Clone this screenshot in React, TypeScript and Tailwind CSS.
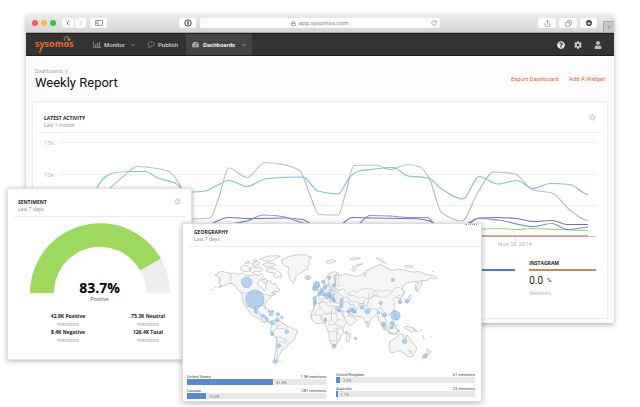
import React from "react";
import {
  ChevronDown,
  ChevronLeft,
  ChevronRight,
  Copy,
  Lock,
  Plus,
  RotateCw,
  Share,
} from "lucide-react";
import { FaArrowCircleDown, FaCog, FaQuestionCircle, FaTachometerAlt, FaUser } from "react-icons/fa";

type Point = [number, number];

/* Horizontal-tangent friendly spline through a list of points. */
function smooth(points: Point[]): string {
  const slope = points.map((p, i) => {
    if (i === 0 || i === points.length - 1) return 0;
    const a = points[i - 1];
    const b = points[i + 1];
    const left = (p[1] - a[1]) / (p[0] - a[0]);
    const right = (b[1] - p[1]) / (b[0] - p[0]);
    return left * right <= 0 ? 0 : (2 * left * right) / (left + right);
  });
  let d = `M${points[0][0]} ${points[0][1]}`;
  for (let i = 1; i < points.length; i++) {
    const [x0, y0] = points[i - 1];
    const [x1, y1] = points[i];
    const h = (x1 - x0) / 3;
    d += `C${x0 + h} ${y0 + slope[i - 1] * h} ${x1 - h} ${y1 - slope[i] * h} ${x1} ${y1}`;
  }
  return d;
}

const series: { color: string; points: Point[] }[] = [
  {
    color: "#bdbdbd",
    points: [[96, 200], [110, 188], [125, 175], [137, 166.5], [150, 167.5], [168, 171], [180, 185], [192, 219], [210, 218], [218, 200], [229, 168], [247, 177.5], [265, 162.5], [285, 165], [300, 171], [310, 195], [319, 214.5], [338, 215], [346, 192], [354, 165.5], [375, 165], [390, 169.5], [408, 164.5], [420, 167], [429, 178], [442, 213], [462, 221], [478, 192], [494, 172], [515, 174], [533, 190], [552, 193], [570, 210], [588, 220.5]],
  },
  {
    color: "#7fc1dc",
    points: [[92, 200], [97, 188], [104, 178], [113, 173], [130, 171.5], [145, 171.5], [158, 178], [175, 183], [184, 190], [193, 192], [205, 191], [216, 186], [229, 180.5], [247, 186.5], [265, 179], [285, 177.5], [303, 177], [318, 191], [338, 194], [350, 177], [359, 171], [375, 169], [393, 167.5], [408, 176], [428, 178], [443, 190], [463, 199], [479, 176.5], [498, 184], [517, 180.5], [533, 188.5], [550, 183.5], [570, 184.5], [588, 194.5]],
  },
  { color: "#9fd46a", points: [[466, 231], [482, 229], [500, 228.5], [517, 229.5], [531, 228.5], [560, 229.5], [588, 230.5]] },
  {
    color: "#8a68b9",
    points: [[205, 226], [213, 223], [228, 217.5], [250, 218.5], [285, 218], [303, 219.5], [315, 226], [338, 226], [352, 217.5], [375, 218], [420, 219], [431, 221.5], [440, 226], [466, 224], [479, 218], [498, 217.5], [517, 218.5], [533, 221.5], [552, 220.5], [567, 224.5], [588, 224.5]],
  },
  {
    color: "#6f98da",
    points: [[228, 224], [247, 221], [263, 215], [282, 216.5], [300, 222], [315, 226], [355, 226], [370, 215.5], [390, 216], [408, 217.5], [428, 217.5], [436, 226], [466, 225], [478, 218.5], [498, 220], [533, 226.5], [552, 223.5], [567, 229.5], [588, 227.5]],
  },
];

function ActivityChart() {
  return (
    <svg viewBox="44 133 552 118" preserveAspectRatio="none" className="block h-[118px] w-full" role="img" aria-label="Latest activity">
      <g stroke="#f1f1f1">
        <path d="M60 142.5H596M60 174.5H596M60 205.5H596" />
        <path d="M515.5 237v5" stroke="#dddddd" />
      </g>
      <g fill="#b3b3b3" fontSize="6">
        <text x="44" y="145">15k</text>
        <text x="44" y="177">10k</text>
        <text x="515" y="246" textAnchor="middle" className="font-['Roboto']">Nov 26 2014</text>
      </g>
      <g fill="none" strokeWidth="1.2">
        {series.map((s) => (
          <path key={s.color} d={smooth(s.points)} stroke={s.color} />
        ))}
      </g>
      <path d="M60 236.5H596" stroke="#c4c4cc" />
      <path d="M60 236H588" stroke="#cf9482" strokeWidth="1.6" />
    </svg>
  );
}

const land = [
  // Alaska, Canada, United States and Mexico
  "M118 180l8-3 4-6 10-2 14 4 12 2 12-1 12 4 12-4 10 7 12 1 14-4 12 3 8-6 6 6-6 8-4 3-8 11 2 8 12 8 6 9 5-6-1-10 2-6 3-10 12 3 4 9 9-3 4 11 9 8-3 5-14 1-8 4 10 0 0 5-9 3-5 7-8 6-6 9-1 10 4 9-5-3-4-9-11 0-12 2-4 8 1 12 7 5 7-5 5 2-3 8 6 3 0 9 7 5 4 0-3 4-9-4-9-10-11-5-12-6-8-12-8-14-6-8-4-10-2-18-1-5-10-6-7-13-11-7-10-1-10 6-8 3-12 4 8-7-6-3-2-5 6-4-7-3 1-4 6-1z",
  "M278 322l10-5 14-1 12 2 11 8 9 6 10 5 18 8 4 6-6 11-3 13-9 7-8 4-7 11-7 7-8 2-2 8-5 6-1 7-3 5 3 8-8 1-5-9 1-15 4-12 0-17 2-15-4-8-8-6-7-14 2-9 4-7-1-6z",
  // Greenland and the Arctic islands
  "M318 133l12-2 8-6 14-3 12-3 12 1 12-1 10 5 12 3-8 4-3 10 3 6-6 8 1 6-10 6-8 5-9 4-8 8-4 11-3 10-6-5-6-8-3-12-3-9 4-9-3-7-9-1-6-5z",
  "M252 134l12-7 16-4 28-1 6 3-14 5-8 7-12 2-14-1-4-3zM228 146l14-6 12 4-4 6-14 3zM196 156l10-6 12 4 8 8-8 8-16-2-6-5zM222 160l12-5 9 4 8-3 10 6-6 8-16 0-8 4-8-6zM262 148l18-5 20 5-4 6-20 3-10-4zM270 166l14-7 16 2 8 8 8 6 2 12-10-3-5 7-8-8 2-9-14-2-8-2zM256 196l12-5 9 7-7 7zM208 145l8-6 8 3-6 5zM234 137l6-4 6 4-5 3z",
  "M387 186l6-4 11 1 5 5-9 6-10-2z",
  // British Isles, Iberia and Europe
  "M414 216l5-6 4 6-3 8-7 1zM423 200l6 2 0 8 6 8-2 8-9 2 3-10-6-7z",
  "M419 245l10-5 4-8 6-4 5-8 6-2 3-6-2-8 5 2 3 8 10 0 5-4 0-8 5-4 4 8 8 6-4 20 12 10 10 8-10 8-14-4-6 2 4 10-10-5-6-10-8-6 6 14 2 6-8-8-6-8-8 2-8 6 1 6-5 6-6 4-7-2z",
  "M446 206l0-8 6-10 6-10 9-6 12-2 10 5 2 8-6 4-3-9-6 4 0 10 6 9 7 0-9 5-7 0-1 8-6 4-4-12-6 4-6 0z",
  // Africa and Madagascar
  "M416 266l14-2 16-4 8 2 0 6 8 5 7-2 8 3 12 0 4 10 7 15 7 10 15-1-3 9-10 12-7 9 3 15-8 8-3 10-7 12-6 7-8 3-6-6-7-18 1-12-6-15-3-9-7-10-13 2-11 1-9-9-6-10 3-14 6-12z",
  "M516 360l7-6 2 6-5 20-7 0-2-8z",
  // Asia
  "M483 176l12 6 14-6 14 4 20 4 16-5 8-8-1 14 6-2-1-16 12-4 20-11 14-4 8 6 24 12 18-4 20 3 24 6 22-1 18 8 22 4 12 6-12 4-6-4-12 8-16 1-8 8-1 12-7 12-5-8 2-14 8-9-22 4-10 0-12 10-4 12 8 6-3 8-9 12-9 0-8-3-7 7 6 8-3 9 3 9-8 12-10 8-12 0-2 6 8 14-5 8-7-8-2 10 6 8 1 8-8-9-4-16-5-4-3-12-9-4-6 7-8 6-3 13-3 10-7-10-4-14-8-7-10-2-14 0-8-6-12-8 8 14 12 2 8 10-7 9-15 8-6-8-10-21-3-10 3-6-14-1-10-6 2-6 14 0-2-6-8-4-6-6-8 0z",
  "M528 164l6-10 12-6 16-2-10 6-12 7-4 10zM602 130l10 0 12 8 8 7-12-3-10-8zM687 152l12-1 14 3-8 4-14-1zM523 131l14-3 18 1-10 4-18 2zM452 139l12-4 12 0 6 4-12 4-8 3-8-3z",
  "M725 212l6-12 9-4-2 14-6 10-6 10-4-8zM690 262l6-6 4-12 6-4 0 8-4 10-8 7zM671 256l4-4 3 12-5 2z",
  "M655 285l4 0 0 9-4-2zM657 296l6 6 4 12-7 0-3-8zM638 330l10-9 6 3-3 13-9 4-5-6zM618 322l9 8 10 14 4 6-8-3-9-12zM640 352l16 3 10 1-8 2-18-3zM656 330l10-1-5 5 3 8-6-4zM685 337l9-3 18 4 14 12-10-2-10 3-8-6-10-4zM713 344l6-2M574 318l4 6-3 3z",
  "M643 379l14-7 6-5 8-8 6-3 8 4-2 6 8 5 4-12 5 9 5 7 10 11 8 11-1 10-5 8-5 9-10 2-9-4-6-8-7-1-4-5-12 0-9 5-10 0-2-8-2-10zM700 407l9 2-2 8-5-3zM755 401l6 7 6 1-8 9-4-3zM741 424l12-8 3 3-8 10-7 1z",
];

const borders =
  "M166 174v32M196 234h60l12 4 12 4 12-2 10-5M206 272l14 2 12-3 8 8M256 196l12-5M300 318l-2 10 8 5 10-6 8-2 3 8M300 343l8-10M284 354l8-5 8-6M302 366l12 0 8 5 10 8-2 9-8-7-14-3-8-12M301 387l8-8M312 388l10 6-3 10M302 340l22 1 12-6M306 398l-3 40M322 376l8-6 4 10" +
  "M418 267l-5 15-12 10M430 264l4 14-18 14M434 278l20 20 16-10 0-14M404 300h16v-8M420 304l14-6 2 16M436 300l18-4M454 298l4-2 24 0 8-10M480 273v24M440 318l0-16M448 326l4-22M458 326l10-14 0-24M468 312l10 12M458 330l20-2 10 2M482 297l5 18-9 12M487 315l10-1 7 6M488 330l14 6M488 330l-4 22 10 8M458 350l22-1 6 5M484 352l-2 20M462 378l20-2 8-6M482 372l8 10M472 398l1-18M480 395l4-14M497 336l-10 10M475 340l12 2" +
  "M430 256v-12l-10 0M435 232l10 12 4-10 8-4 10 6 9-6 8-8M448 218l6 10M460 216l2 14M470 214l8 6 12 4-4 12 18 8M466 238l14 0 8 12M462 236l6 12 10 2M480 236l6-10M455 244l10-4M458 208l4-24 8-6M478 206l2-26M490 180l-2 24-10 10M484 214l14-4M488 226l18-4 10 18M474 250l12 2M500 248l12-2 8 4 6 6M520 244l2-12 10-5 14 4 10-8 24-4 10 4 18 10-4 10-12 1-14 8-16-6-12 4-14-8-16-2M578 247l4-12M566 254l-2 12-14 0-6-8M544 256l-10 6-12-6M522 268l-2-12M505 262l10-2 7 8 14 2 4 16M540 286l10-10 2-10 14-2M556 282l10-16 8 6 6-12M572 272l10 8 18 3M594 230l16-5 12 5 16-6 14 6-10 8-14 9-20-2-14-7-6-6M574 268l6-14 8-4M606 296l-2-12-6 0M604 284l12-8 4 10 10 6M616 290l6 14 8-2 2 8M652 228l8-10 14 0 14 14-9 10M505 292l12-4 10 8M527 296l-14 10M586 252l10-14M660 250l8-8 10-2";

const bubbles: [number, number, number][] = [
  [238, 253, 28], [213, 202, 16], [242, 288, 6], [423, 210, 10], [417, 221, 6], [397, 189, 4],
  [461, 188, 5], [443, 201, 5], [449, 215, 6], [440, 227, 6], [433, 236, 6], [447, 239, 5],
  [456, 243, 7], [461, 237, 6], [469, 247, 6], [474, 256, 5], [468, 225, 4], [475, 211, 4],
  [417, 250, 5], [418, 259, 5], [417, 268, 4], [263, 302, 5], [271, 308, 4], [275, 315, 5],
  [280, 289, 3], [287, 297, 6], [291, 289, 3], [307, 298, 5], [319, 307, 4], [305, 314, 6],
  [290, 324, 5], [290, 357, 5], [334, 350, 6], [309, 392, 6], [298, 440, 6], [449, 315, 5],
  [490, 285, 6], [498, 255, 5], [498, 264, 5], [498, 273, 5], [519, 288, 4], [528, 284, 6],
  [534, 288, 6], [539, 291, 4], [560, 277, 6], [576, 289, 8], [609, 293, 4], [627, 299, 6],
  [616, 264, 5], [652, 195, 5], [673, 261, 5], [694, 258, 6], [660, 302, 14], [651, 324, 6],
  [648, 337, 5], [626, 329, 6], [668, 348, 4], [687, 379, 7], [749, 423, 6], [476, 394, 6],
  [513, 353, 4], [540, 371, 4],
];

function WorldMap() {
  return (
    <svg viewBox="24 96 891 375" className="block h-[125px] w-full" role="img" aria-label="Mentions by country">
      <g fill="#f6f6f6" stroke="#b2b2b2" strokeWidth="1.9" strokeLinejoin="round">
        {land.map((d) => (
          <path key={d} d={d} />
        ))}
        <path d={borders} fill="none" strokeWidth="1.4" />
        <path
          d="M102 226l9-4M117 219l8-4M130 216l10-5M280 286l16 5M301 296l9 2M260 332l4 2M319 439l4 1M732 348l8-4M742 360l4 14M765 367l4-4M770 168l6 2"
          fill="none"
        />
      </g>
      <g fill="#7db5ea" fillOpacity="0.55" stroke="#6aa9e6" strokeOpacity="0.8" strokeWidth="1.5">
        {bubbles.map(([x, y, r]) => (
          <circle key={`${x}-${y}`} cx={x} cy={y} r={r} />
        ))}
      </g>
    </svg>
  );
}

function Gauge() {
  return (
    <svg viewBox="0 0 140 70" className="mx-auto mt-[6px] block h-[70px] w-[140px]" role="img" aria-label="83.7% positive">
      <path d="M0 70A70 70 0 0 1 131 35.8L110.2 47.5A46 46 0 0 0 24 70Z" fill="#9dd95f" />
      <path d="M131 35.8A70 70 0 0 1 140 70H116A46 46 0 0 0 110.2 47.5Z" fill="#eeeeee" />
    </svg>
  );
}

function WidgetHead({ title, sub, gear }: { title: string; sub: string; gear?: boolean }) {
  return (
    <header className="flex h-[18px] items-start justify-between">
      <div>
        <h2 className="text-[5px] leading-[8px] font-bold text-[#222]">{title}</h2>
        <p className="text-[5px] leading-[7px] text-[#888]">{sub}</p>
      </div>
      {gear && (
        <button aria-label={`${title} settings`} className="text-[#d8d8d8]">
          <FaCog size={7} />
        </button>
      )}
    </header>
  );
}

function Stat({ value }: { value: string }) {
  return (
    <div>
      <dt className="font-bold text-[#222]">{value}</dt>
      <dd className="text-[#999]">mentions</dd>
    </div>
  );
}

function Country({ name, mentions, share, bar }: { name: string; mentions: string; share: string; bar: number }) {
  return (
    <div className="h-[14px] font-['Roboto'] text-[4px] leading-[5px] text-[#444]">
      <div className="flex justify-between">
        <span>{name}</span>
        <span>{mentions}</span>
      </div>
      <div className="flex h-[6px] items-center gap-[3px] bg-[#e8e8e8] text-[#777]">
        <div className="h-full bg-[#558bd0]" style={{ width: `${bar}%` }} />
        <span>{share}</span>
      </div>
    </div>
  );
}

function Logo() {
  return (
    <a href="#home" aria-label="sysomos" className="relative block w-[58px] text-[9px] leading-[20px] font-bold text-[#f26a21]">
      sysomos
      <svg viewBox="0 0 40 22" className="absolute top-0 left-0 h-[22px] w-[40px]" fill="none">
        <path d="M29.5 6.5a2.6 2.6 0 1 1 4.8-2.4" stroke="#999" />
        <circle cx="34" cy="5.5" r="1.6" fill="#f26a21" />
        <path d="M6.5 13l-2 6" stroke="#f26a21" strokeWidth="1.4" />
      </svg>
    </a>
  );
}

const chromeButton = "flex h-[10px] items-center justify-center rounded-[2px] bg-[#fcfcfc] text-[#777]";

function TitleBar() {
  return (
    <div className="flex h-[19px] items-center rounded-t-[4px] border-b border-[#a8a8a8] bg-linear-to-b from-[#ececec] to-[#d6d6d6] pl-[6px]">
      <div className="flex gap-[3px]">
        <span className="size-[6px] rounded-full bg-[#fc5753]" />
        <span className="size-[6px] rounded-full bg-[#fdbc2f]" />
        <span className="size-[6px] rounded-full bg-[#27c840]" />
      </div>
      <div className="ml-[6px] flex gap-px">
        <button aria-label="Back" className={`${chromeButton} w-[12px]`}>
          <ChevronLeft size={8} color="#333" />
        </button>
        <button aria-label="Forward" className={`${chromeButton} w-[11px]`}>
          <ChevronRight size={8} color="#bbb" />
        </button>
      </div>
      <button aria-label="Sidebar" className={`${chromeButton} ml-[4px] w-[17px]`}>
        <svg viewBox="0 0 8 6" className="h-[6px] w-[8px]" fill="none" stroke="#888" strokeWidth="0.8">
          <path d="M0.5 0.5h7v5h-7zM3 0.5v5M1.2 2h1M1.2 3.5h1" />
        </svg>
      </button>
      <button aria-label="Passwords" className={`${chromeButton} ml-[72px] w-[17px]`}>
        <svg viewBox="0 0 8 8" className="size-[8px]">
          <circle cx="4" cy="4" r="3.2" fill="none" stroke="#333" strokeWidth="0.9" />
          <path d="M4 2.2v3.6" stroke="#333" strokeWidth="1.3" />
        </svg>
      </button>
      <div className={`${chromeButton} relative ml-[4px] flex-1 gap-[2px] text-[6px] leading-[8px] text-[#444]`}>
        <Lock size={5} strokeWidth={3} color="#777" />
        <span>app.sysomos.com</span>
        <button aria-label="Reload" className="absolute right-[3px]">
          <RotateCw size={6} color="#777" />
        </button>
      </div>
      <div className="ml-[98px] flex gap-[3px]">
        <button aria-label="Share" className={`${chromeButton} w-[18px]`}>
          <Share size={7} />
        </button>
        <button aria-label="Tabs" className={`${chromeButton} w-[18px]`}>
          <Copy size={7} className="-scale-x-100" />
        </button>
        <button aria-label="Downloads" className={`${chromeButton} w-[17px]`}>
          <FaArrowCircleDown size={6} color="#333" />
        </button>
      </div>
      <button aria-label="New tab" className="ml-[6px] flex h-[11px] w-[11px] items-center justify-center self-end border-t border-l border-[#aaa] bg-[#c8c8c8] text-[#888]">
        <Plus size={6} />
      </button>
    </div>
  );
}

function NavBar() {
  return (
    <nav className="flex h-[23px] items-stretch border-y border-[#1c1c1c] bg-[#333] pl-[9px] text-[6px] text-[#d0d0d0]">
      <Logo />
      <a href="#monitor" className="flex w-[54px] items-center gap-[3px] font-['Roboto'] font-medium">
        <svg viewBox="0 0 8 7" className="h-[7px] w-[8px]" fill="none" stroke="#8c8c8c">
          <path d="M0.5 0.5v6h7.5" strokeWidth="0.8" />
          <path d="M2.4 6V3.6M4.3 6V2M6.4 6V1" strokeWidth="1.1" />
        </svg>
        Monitor
        <ChevronDown size={6} strokeWidth={3} className="ml-[2px]" color="#999" />
      </a>
      <a href="#publish" className="flex w-[39px] items-center gap-[3px] font-['Roboto'] font-medium">
        <svg viewBox="0 0 8 7" className="h-[7px] w-[8px]" fill="none" stroke="#8c8c8c" strokeWidth="0.8">
          <path d="M2 4.8a3.3 2.2 0 1 1 1.8 0.5L1.6 6.4z" />
        </svg>
        Publish
      </a>
      <a href="#dashboards" className="flex w-[66px] items-center gap-[4px] bg-[#444] pl-[6px] font-['Roboto'] font-bold text-[#eee]">
        <FaTachometerAlt size={7} color="#bbb" />
        Dashboards
        <ChevronDown size={6} strokeWidth={3} className="ml-[2px]" color="#bbb" />
      </a>
      <div className="ml-auto flex items-center gap-[9px] pr-[12px] text-[#ccc]">
        <button aria-label="Help">
          <FaQuestionCircle size={8} color="#e8e8e8" />
        </button>
        <button aria-label="Settings">
          <FaCog size={8} />
        </button>
        <button aria-label="Account" className="ml-[3px]">
          <FaUser size={8} color="#bbb" />
        </button>
      </div>
    </nav>
  );
}

function Browser() {
  return (
    <section className="rounded-t-[4px] bg-[#fcfcfc] shadow-[0_2px_5px_rgba(0,0,0,0.3)]">
      <TitleBar />
      <NavBar />
      <div className="px-[6px] pt-[11px] pb-[4px]">
        <div className="flex items-start justify-between px-[3px]">
          <div>
            <a href="#dashboards" className="flex items-center text-[5px] leading-[8px] text-[#999]">
              Dashboards
              <ChevronRight size={5} strokeWidth={3} className="ml-px" color="#666" />
            </a>
            <h1 className="font-['Roboto'] text-[13px] leading-[15px] text-[#111]">Weekly Report</h1>
          </div>
          <div className="mt-[7px] flex gap-[10px] font-['Roboto'] text-[6px] leading-[10px] text-[#f0592f]">
            <a href="#export">Export Dashboard</a>
            <a href="#add">Add A Widget</a>
          </div>
        </div>
        <article className="mt-[11px] border border-[#efefef] bg-white px-[6px] pt-[12px] pb-[21px]">
          <div className="border-b border-[#f0f0f0] px-[5px]">
            <WidgetHead title="LATEST ACTIVITY" sub="Last 1 month" gear />
          </div>
          <div className="px-[5px]">
            <ActivityChart />
            <div className="mt-[8px] grid grid-cols-7 gap-[14px]">
              <div className="col-start-6 mt-[10px] h-[2px] bg-[#3f7fd0]" />
              <div>
                <h3 className="text-[5px] leading-[8px] font-bold text-[#222]">INSTAGRAM</h3>
                <div className="mt-[2px] h-[2px] bg-[#cb8a50]" />
                <p className="mt-[2px] flex gap-[4px] font-['Roboto'] text-[10px] leading-[16px] text-[#222]">
                  0.0 <span className="text-[6px] leading-[13px]">%</span>
                </p>
                <p className="text-[5px] leading-[8px] text-[#aaa]">Mentions</p>
              </div>
            </div>
          </div>
        </article>
      </div>
    </section>
  );
}

function Sentiment() {
  return (
    <section className="absolute top-[188px] left-[7px] w-[185px] border border-[#e2e2e2] bg-white px-[6px] pt-[9px] pb-[15px] shadow-[0_1px_5px_rgba(0,0,0,0.3)]">
      <div className="border-b border-[#ececec] px-[4px]">
        <WidgetHead title="SENTIMENT" sub="Last 7 days" gear />
      </div>
      <Gauge />
      <div className="-mt-[13px] text-center">
        <p className="text-[14px] leading-[16px] font-bold text-black">83.7%</p>
        <p className="text-[5px] leading-[6px] text-[#555]">Positive</p>
      </div>
      <dl className="mt-[10px] grid grid-cols-[80px_80px] pl-[14px] text-center text-[5px] leading-[8px]">
        <Stat value="42.8K Positive" />
        <Stat value="75.3K Neutral" />
        <Stat value="8.4K Negative" />
        <Stat value="126.4K Total" />
      </dl>
    </section>
  );
}

function Geography() {
  return (
    <section className="absolute top-[223px] left-[182px] h-[179px] w-[300px] overflow-hidden border border-[#dcdcdc] bg-white shadow-[0_1px_6px_rgba(0,0,0,0.3)]">
      <div className="absolute top-0 right-[4px] w-[12px] border-t border-dotted border-[#999]" />
      <div className="ml-[6px] border-b border-[#ececec] pt-[4px] pl-[5px]">
        <WidgetHead title="GEORGRAPHY" sub="Last 7 days" />
      </div>
      <WorldMap />
      <div className="grid grid-cols-2 gap-[10px] pr-[6px] pl-[4px]">
        <div className="pt-[2px]">
          <Country name="United States" mentions="1.3K mentions" share="61.8%" bar={61.8} />
          <Country name="Canada" mentions="281 mentions" share="13.5%" bar={13.5} />
        </div>
        <div>
          <Country name="United Kingdom" mentions="61 mentions" share="2.9%" bar={2.9} />
          <Country name="Australia" mentions="23 mentions" share="1.1%" bar={1.1} />
        </div>
      </div>
    </section>
  );
}

export default function App() {
  return (
    <main className="relative min-h-screen bg-white px-[26px] pt-[14px] font-['Open_Sans','Noto_Sans',sans-serif]">
      <Browser />
      <Sentiment />
      <Geography />
    </main>
  );
}
